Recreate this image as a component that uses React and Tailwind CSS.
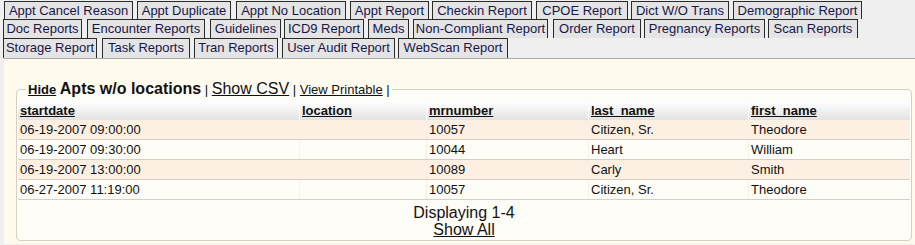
import React from 'react'

const TAB_ROWS = [
  {
    className: 'h-[19px] pt-[1px] pl-[4px]',
    tabs: [
      { label: 'Appt Cancel Reason', cls: 'w-[129px]' },
      { label: 'Appt Duplicate', cls: 'ml-[4px] w-[94px]' },
      { label: 'Appt No Location', cls: 'ml-[5px] w-[110px]' },
      { label: 'Appt Report', cls: 'ml-[4px] w-[79px]' },
      { label: 'Checkin Report', cls: 'ml-[3px] w-[100px]' },
      { label: 'CPOE Report', cls: 'ml-[4px] w-[92px]' },
      { label: 'Dict W/O Trans', cls: 'ml-[3px] w-[98px]' },
      { label: 'Demographic Report', cls: 'ml-[4px] w-[129px]' },
    ],
  },
  {
    className: 'h-[19px] pl-[3px]',
    tabs: [
      { label: 'Doc Reports', cls: 'w-[79px]' },
      { label: 'Encounter Reports', cls: 'ml-[5px] w-[118px]' },
      { label: 'Guidelines', cls: 'ml-[5px] w-[71px]' },
      { label: 'ICD9 Report', cls: 'ml-[3px] w-[80px]' },
      { label: 'Meds', cls: 'ml-[4px] w-[41px]' },
      { label: 'Non-Compliant Report', cls: 'ml-[4px] w-[135px]' },
      { label: 'Order Report', cls: 'ml-[5px] w-[88px]' },
      { label: 'Pregnancy Reports', cls: 'ml-[3px] w-[121px]' },
      { label: 'Scan Reports', cls: 'ml-[3px] w-[90px]' },
    ],
  },
  {
    className: 'h-[20px] pl-[3px]',
    tabs: [
      { label: 'Storage Report', cls: 'w-[94px]' },
      { label: 'Task Reports', cls: 'ml-[5px] w-[88px]' },
      { label: 'Tran Reports', cls: 'ml-[4px] w-[84px]' },
      { label: 'User Audit Report', cls: 'ml-[4px] w-[113px]' },
      { label: 'WebScan Report', cls: 'ml-[3px] w-[110px]' },
    ],
  },
]

const COLUMNS = ['startdate', 'location', 'mrnumber', 'last_name', 'first_name']

const ROWS = [
  ['06-19-2007 09:00:00', '', '10057', 'Citizen, Sr.', 'Theodore'],
  ['06-19-2007 09:30:00', '', '10044', 'Heart', 'William'],
  ['06-19-2007 13:00:00', '', '10089', 'Carly', 'Smith'],
  ['06-27-2007 11:19:00', '', '10057', 'Citizen, Sr.', 'Theodore'],
]

const GRID = 'grid grid-cols-[281px_127px_162px_160px_162px]'

function Tab({ label, cls }) {
  return (
    <a
      href="#"
      className={`${cls} h-full shrink-0 bg-[#e4e4e4] border-l border-t border-r border-[#2a2a2a] text-[13px] leading-[17px] text-[#16164a] text-center whitespace-nowrap overflow-hidden`}
    >
      {label}
    </a>
  )
}

export default function App() {
  return (
    <div className="w-[915px] h-[245px] overflow-hidden bg-[#efefef] font-['Liberation_Sans',Arial,sans-serif] text-[#111]">
      {/* report tabs */}
      {TAB_ROWS.map((row, i) => (
        <div key={i} className={`flex items-end ${row.className}`}>
          {row.tabs.map((t) => (
            <Tab key={t.label} {...t} />
          ))}
        </div>
      ))}

      {/* report panel */}
      <div className="ml-[4px] h-[186px] bg-[#fffaee] border-t border-[#a9a9a9] pt-[21px] pl-[12px] pr-[3px]">
        <fieldset className="border border-[#d5d1c2] rounded-[4px] bg-[#fffdf8] px-[1px] pb-[2px]">
          <legend className="ml-[8px] px-[2px] text-[13px] leading-[18px] whitespace-nowrap">
            <a href="#" className="font-bold underline">Hide</a>{' '}
            <span className="text-[16px] font-bold">Apts w/o locations</span>{' '}
            |{' '}
            <a href="#" className="text-[16px] underline">Show CSV</a>{' '}
            |{' '}
            <a href="#" className="underline">View Printable</a>{' '}
            |
          </legend>

          <div className="mt-[2px] text-[13px] leading-[19px]">
            <div className={`${GRID} h-[19px] bg-gradient-to-b from-[#ffffff] to-[#e2e2e2]`}>
              {COLUMNS.map((c, i) => (
                <div key={c} className={`pl-[2px] font-bold ${i > 0 ? 'border-l border-[#fafafa]' : ''}`}>
                  <a href="#" className="underline">{c}</a>
                </div>
              ))}
            </div>
            {ROWS.map((r, ri) => (
              <div
                key={ri}
                className={`${GRID} h-[20px] border-b border-[#d3d0c8] ${ri % 2 === 0 ? 'bg-[#fdf0e2]' : 'bg-[#fffdf7]'}`}
              >
                {r.map((v, ci) => (
                  <div key={ci} className={`pl-[2px] ${ci > 0 ? 'border-l border-[#f6f0e6]' : ''}`}>
                    {v}
                  </div>
                ))}
              </div>
            ))}
          </div>

          <div className="mt-[4px] text-center text-[16px] leading-[17px]">
            <div>Displaying 1-4</div>
            <a href="#" className="underline">Show All</a>
          </div>
        </fieldset>
      </div>
    </div>
  )
}
